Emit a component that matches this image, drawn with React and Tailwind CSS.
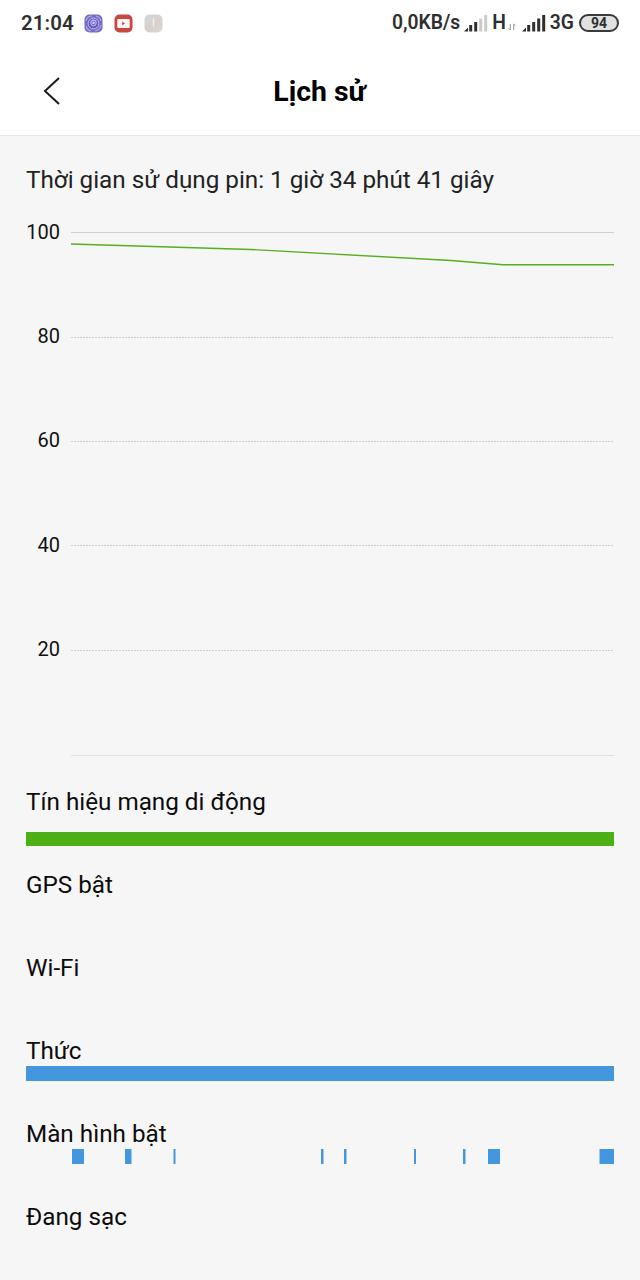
const INK = "#2f2f2f";

function Signal({ active }) {
  const heights = [4, 6.5, 9.5, 13, 16.5];
  return (
    <svg className="h-[18px] w-6 shrink-0" viewBox="0 0 24 18">
      <path d="M0 17.5L4 13.5V17.5Z" fill={INK} />
      {heights.slice(1).map((h, i) => (
        <rect key={h} x={5.2 + i * 5} y={17.5 - h} width="3" height={h} fill={i + 1 < active ? INK : "#cbcbcb"} />
      ))}
    </svg>
  );
}

function StatusBar() {
  return (
    <div className="flex h-[46px] items-center pr-[21px] pl-[21px] text-[20px] leading-6 font-bold text-[#2f2f2f]">
      <span className="w-[63px] text-[20.5px] font-semibold tracking-[0.1px]">21:04</span>
      <div className="flex items-center gap-[11px]">
        <svg className="h-[19px] w-[19px]" viewBox="0 0 19 19">
          <rect x="0.5" y="0.5" width="18" height="18" rx="5" fill="#736bc4" />
          <path d="M2 7Q3 2 8 2M11 17Q16 16 17 11M2 12Q3 16 7 17M12 2Q16 3 17 7" fill="none" stroke="#b6a9ed" strokeWidth="1.2" />
          <circle cx="9.5" cy="9.5" r="5.4" fill="#6258b5" stroke="#c9bdf2" />
          <path d="M7 7.5Q9.5 5 12 7.5V10Q9.5 14 7 10Z" fill="none" stroke="#b5b9ff" strokeWidth="1.2" />
          <circle cx="9.5" cy="9" r="1.2" fill="#e1d5ff" />
        </svg>
        <svg className="h-[19px] w-[19px]" viewBox="0 0 19 19">
          <rect x="0.5" y="0.5" width="18" height="18" rx="5" fill="#c54842" />
          <rect x="3.3" y="5" width="12.4" height="9" rx="0.8" fill="#fff5f3" />
          <path d="M8.2 7.8L11 9.5L8.2 11.2Z" fill="#a9445d" />
        </svg>
        <svg className="h-[19px] w-[19px]" viewBox="0 0 19 19">
          <defs>
            <linearGradient id="pale" x1="0" y1="0" x2="1" y2="1">
              <stop stopColor="#cbdada" />
              <stop offset="0.55" stopColor="#dccfcb" />
              <stop offset="1" stopColor="#d9d9d7" />
            </linearGradient>
          </defs>
          <rect x="0.5" y="0.5" width="18" height="18" rx="5" fill="url(#pale)" />
          <path d="M9.5 4.5V12.5" fill="none" stroke="#f2eeee" strokeWidth="1.5" />
        </svg>
      </div>
      <div className="ml-auto flex items-center">
        <span className="mr-1 text-[19.3px] font-semibold">0,0KB/s</span>
        <Signal active={3} />
        <span className="ml-[4px] text-[19.3px] font-semibold">H</span>
        <svg className="mr-[6px] ml-[2px] h-2 w-2 translate-y-1" viewBox="0 0 8 8">
          <path d="M2.3 1V7L0.5 5.2M5.7 7V1L7.5 2.8" fill="none" stroke="#999" />
        </svg>
        <Signal active={5} />
        <span className="mr-[5px] ml-[4px] text-[19.3px] font-semibold">3G</span>
        <span className="flex h-[18px] w-10 items-center justify-center rounded-full border-2 border-[#3a3a3a] bg-[#e1e1e1] text-[14px] leading-none">94</span>
      </div>
    </div>
  );
}

function Header() {
  return (
    <header className="flex h-[89px] items-center px-[43px]">
      <svg className="h-[30px] w-[18px]" viewBox="0 0 18 30">
        <path d="M16 2L2 15L16 28" fill="none" stroke="#1b1b1b" strokeWidth="2" />
      </svg>
      <h1 className="mt-[2px] mr-[19px] flex-1 text-center text-[28.4px] leading-9 font-bold text-black">Lịch sử</h1>
    </header>
  );
}

function BatteryChart() {
  const labels = ["100", "80", "60", "40", "20"];
  return (
    <div className="flex h-[542px]">
      <div className="w-[34px] shrink-0 text-right text-[20px] text-[#111]">
        {labels.map((l) => (
          <div key={l} className="h-[104.2px] leading-6">{l}</div>
        ))}
      </div>
      <svg className="ml-[11px] h-[540px] w-[543px]" viewBox="0 0 543 540">
        <path d="M0 12.5H543" stroke="#d0d0d0" />
        <path d="M0 117.5H543M0 221.5H543M0 325.5H543M0 430.5H543" stroke="#cecece" strokeDasharray="2 1" />
        <path d="M0 535.5H543" stroke="#e0e0e0" />
        <path d="M0 24L180 29.5L380 40.5L432 44.8H543" fill="none" stroke="#58ad23" strokeWidth="1.4" />
      </svg>
    </div>
  );
}

const screenOnBars = [
  [46, 12], [99, 6.5], [147.5, 2], [295, 2.5], [318, 2.5],
  [388, 2], [437, 2.5], [462, 12], [573.5, 14.5],
];

const rows = [
  { label: "Tín hiệu mạng di động", color: "#4eae15", bars: [[0, 588]], gap: true },
  { label: "GPS bật", bars: [] },
  { label: "Wi-Fi", bars: [] },
  { label: "Thức", color: "#4497df", bars: [[0, 588]] },
  { label: "Màn hình bật", color: "#4497df", bars: screenOnBars },
  { label: "Đang sạc", bars: [] },
];

function HistoryRow({ label, color, bars, gap }) {
  return (
    <div className="h-[83px]">
      <div className="h-[30px] text-[24.25px] leading-[31px] text-[#0c0c0c]">{label}</div>
      {bars.length > 0 && (
        <svg className={gap ? "mt-[15px] block h-[14px] w-full" : "block h-[15px] w-full"} viewBox="0 0 588 15" preserveAspectRatio="none">
          {bars.map(([x, w]) => (
            <rect key={x} x={x} y="0" width={w} height="15" fill={color} />
          ))}
        </svg>
      )}
    </div>
  );
}

export default function App() {
  return (
    <div className="h-[1280px] w-[640px] overflow-hidden bg-white font-[Roboto,sans-serif]">
      <StatusBar />
      <Header />
      <main className="h-[1145px] overflow-hidden border-t border-[#e8e8e8] bg-[#f6f6f6] px-[26px] pt-7">
        <p className="mb-6 h-8 text-[24.25px] leading-[33px] text-[#222]">Thời gian sử dụng pin: 1 giờ 34 phút 41 giây</p>
        <BatteryChart />
        <div className="mt-[25px]">
          {rows.map((row) => (
            <HistoryRow key={row.label} {...row} />
          ))}
        </div>
      </main>
    </div>
  );
}
